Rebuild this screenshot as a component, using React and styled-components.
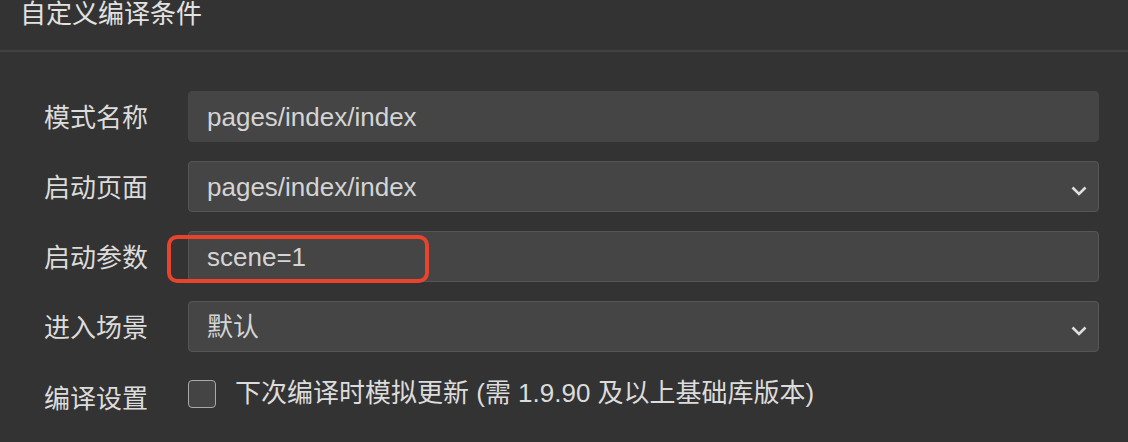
import React from "react";
import styled, { createGlobalStyle } from "styled-components";

const Global = createGlobalStyle`
  html, body { margin: 0; padding: 0; background: #333333; }
  body {
    font-family: "Liberation Sans", "Noto Sans CJK SC", sans-serif;
    color: #dcdcdc;
    width: 1128px;
    height: 442px;
    overflow: hidden;
  }
`;

const Page = styled.div`
  width: 1128px;
  height: 442px;
  background: #333333;
  display: flex;
  flex-direction: column;
`;

const Header = styled.div`
  box-sizing: content-box;
  height: 49px;
  padding: 1px 0 0 20px;
  border-bottom: 2px solid #424242;
  font-size: 26px;
  line-height: 26px;
  color: #e2e2e2;
`;

const Form = styled.div`
  display: flex;
  flex-direction: column;
  gap: 19px;
  padding: 39px 29px 0 44px;
`;

const Row = styled.div`
  display: flex;
  align-items: center;
  height: ${(p) => p.$h || 51}px;
`;

const Label = styled.div`
  width: 144px;
  flex: none;
  font-size: 26px;
  color: #dcdcdc;
  line-height: 1;
  padding-top: ${(p) => p.$pt || 2}px;
`;

const Field = styled.div`
  position: relative;
  flex: 1;
  height: 100%;
  box-sizing: border-box;
  display: flex;
  align-items: center;
  padding-left: 18px;
  padding-right: 11px;
  background: #454545;
  border: 1px solid ${(p) => (p.$flat ? "#454545" : "#565656")};
  border-radius: 4px;
  font-size: 26px;
  color: #d4d4d4;
`;

const Value = styled.span`
  flex: 1;
  line-height: 1;
  padding-top: 1px;
`;

const Chevron = styled.svg`
  width: 16px;
  height: 10px;
  margin-top: 9px;
  flex: none;
`;

const Highlight = styled.div`
  position: absolute;
  left: -22px;
  top: 3px;
  width: 262px;
  height: 48px;
  box-sizing: border-box;
  border: 4px solid #e8432d;
  border-radius: 10px;
  pointer-events: none;
`;

const CheckWrap = styled.label`
  display: flex;
  align-items: center;
  gap: 19px;
  font-size: 26px;
  color: #dcdcdc;
`;

const CheckText = styled.span`
  line-height: 1;
  padding-bottom: 3px;
`;

const Box = styled.span`
  width: 28px;
  height: 28px;
  box-sizing: border-box;
  border: 1.5px solid #a9a9a9;
  border-radius: 4px;
  background: #444444;
  flex: none;
`;

const Down = () => (
  <Chevron viewBox="0 0 16 10">
    <polyline
      points="1.5,1.5 8,8 14.5,1.5"
      fill="none"
      stroke="#dedede"
      strokeWidth="2.6"
    />
  </Chevron>
);

export default function App() {
  return (
    <Page>
      <Global />
      <Header>自定义编译条件</Header>
      <Form>
        <Row>
          <Label>模式名称</Label>
          <Field $flat>
            <Value>pages/index/index</Value>
          </Field>
        </Row>
        <Row>
          <Label>启动页面</Label>
          <Field>
            <Value>pages/index/index</Value>
            <Down />
          </Field>
        </Row>
        <Row>
          <Label>启动参数</Label>
          <Field>
            <Value>scene=1</Value>
            <Highlight />
          </Field>
        </Row>
        <Row>
          <Label>进入场景</Label>
          <Field>
            <Value>默认</Value>
            <Down />
          </Field>
        </Row>
        <Row $h={46}>
          <Label $pt={10}>编译设置</Label>
          <CheckWrap>
            <Box />
            <CheckText>下次编译时模拟更新 (需 1.9.90 及以上基础库版本)</CheckText>
          </CheckWrap>
        </Row>
      </Form>
    </Page>
  );
}
